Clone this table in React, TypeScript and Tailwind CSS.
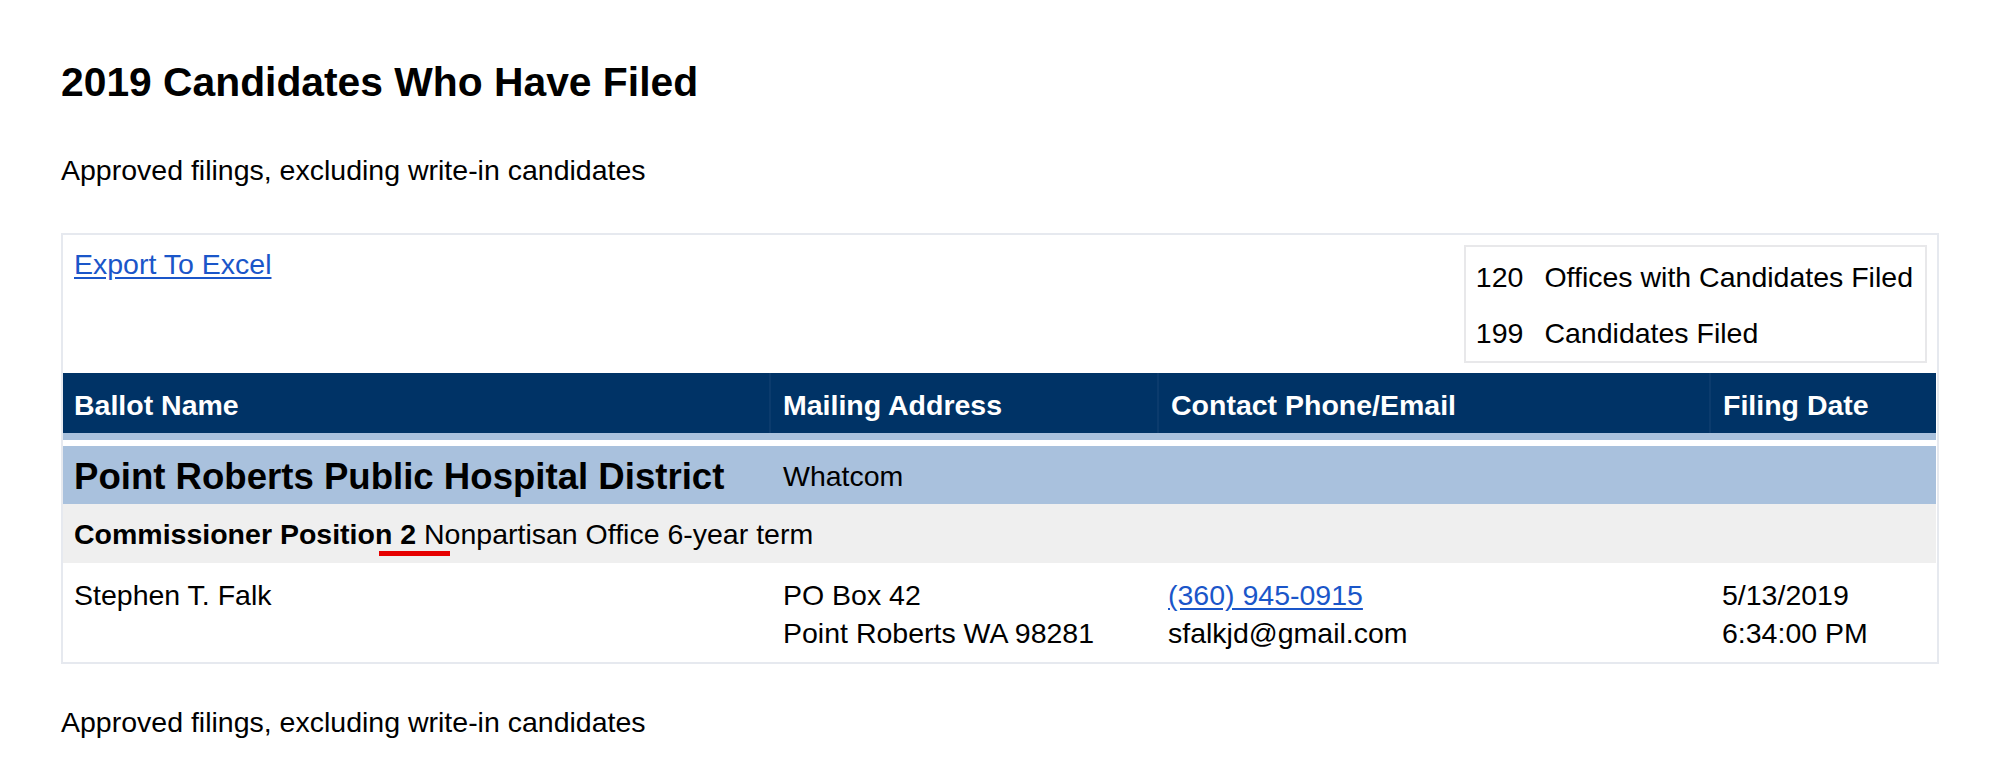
import React from 'react';

const cols = 'grid grid-cols-[706px_388px_552px_1fr]';

const stats = [
  { count: 120, label: 'Offices with Candidates Filed' },
  { count: 199, label: 'Candidates Filed' },
];

const headers = ['Ballot Name', 'Mailing Address', 'Contact Phone/Email', 'Filing Date'];

export default function App() {
  return (
    <div className="min-h-[770px] w-full bg-white px-[61px] pt-[58px] font-['Liberation_Sans',Arial,sans-serif] text-black">
      <h1 className="text-[40.8px] leading-[48px] font-bold">2019 Candidates Who Have Filed</h1>
      <p className="mt-[47px] text-[28.5px] leading-[34px]">Approved filings, excluding write-in candidates</p>

      {/* Filings panel */}
      <div className="mt-[46px] border-2 border-[#e6e9ef]">
        <div className="flex items-start justify-between pl-[11px] pr-[10px] py-[10px]">
          <a href="#" className="mt-[2px] text-[28.5px] leading-[34px] text-[#1a56c9] underline underline-offset-[3px]">
            Export To Excel
          </a>
          <div className="grid grid-cols-[auto_auto] gap-x-[21px] gap-y-[22px] border-2 border-[#e8e8ea] pl-[10px] pr-[12px] pt-[13px] pb-[11px] text-[28.5px] leading-[34px]">
            {stats.map(s => (
              <React.Fragment key={s.label}>
                <span>{s.count}</span>
                <span>{s.label}</span>
              </React.Fragment>
            ))}
          </div>
        </div>

        {/* Table header */}
        <div className={`${cols} mr-[1px] bg-[#003366] border-b-[7px] border-[#a9c1dd] text-white`}>
          {headers.map((h, i) => (
            <div
              key={h}
              className={`pt-[15px] pb-[11px] text-[28.5px] leading-[34px] font-bold ${i === 0 ? 'pl-[11px]' : 'border-l-2 border-[#0b3b6d] pl-[12px]'}`}
            >
              {h}
            </div>
          ))}
        </div>

        {/* Jurisdiction row */}
        <div className={`${cols} mr-[1px] mt-[6px] bg-[#a9c1dd]`}>
          <div className="pl-[11px] pt-[10px] pb-[6px] text-[36.6px] leading-[42px] font-bold">Point Roberts Public Hospital District</div>
          <div className="pl-[14px] pt-[13px] text-[28.5px] leading-[34px]">Whatcom</div>
          <div />
          <div />
        </div>

        {/* Office row */}
        <div className="relative mr-[1px] bg-[#efefef] pl-[11px] pt-[13px] pb-[12px] text-[28.5px] leading-[34px]">
          <span className="font-bold">Commissioner Position 2</span> Nonpartisan Office 6-year term
          <div className="absolute left-[316px] top-[47px] h-[5px] w-[71px] bg-[#e60000]" />
        </div>

        {/* Candidate row */}
        <div className={`${cols} mr-[1px] pt-[13px] pb-[10px] text-[28.5px] leading-[38px]`}>
          <div className="pl-[11px]">Stephen T. Falk</div>
          <div className="pl-[14px]">
            <div>PO Box 42</div>
            <div>Point Roberts WA 98281</div>
          </div>
          <div className="pl-[11px]">
            <a href="#" className="text-[#1a56c9] underline underline-offset-[3px]">(360) 945-0915</a>
            <div>sfalkjd@gmail.com</div>
          </div>
          <div className="pl-[13px]">
            <div>5/13/2019</div>
            <div>6:34:00 PM</div>
          </div>
        </div>
      </div>

      <p className="mt-[41px] text-[28.5px] leading-[34px]">Approved filings, excluding write-in candidates</p>
    </div>
  );
}
